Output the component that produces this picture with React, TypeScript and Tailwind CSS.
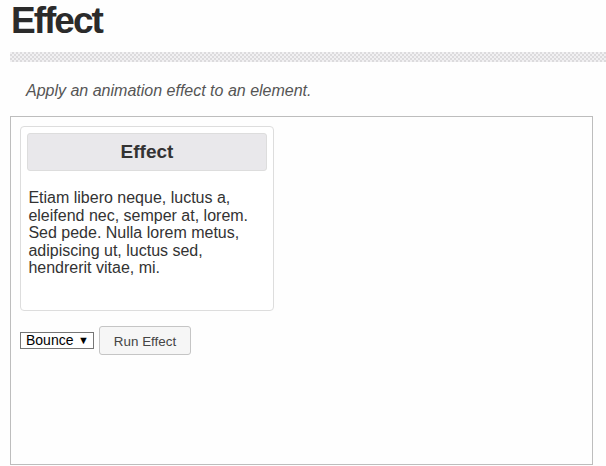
import React, { useState } from 'react';

const App = () => {
  const [effect, setEffect] = useState('bounce');

  return (
    <div className="min-h-screen bg-[#fefefe] font-['Liberation_Sans',Arial,sans-serif] text-[#333]">
      <h1 className="pl-[11px] pt-[2px] text-[37px] leading-[38px] font-bold tracking-[-2px] text-[#2b2b2b]">
        Effect
      </h1>

      <div className="mt-[12px] ml-[10px] h-[10px] bg-[image:repeating-conic-gradient(#dcdbdd_0_25%,#f1f0f2_0_50%)] bg-[length:4px_4px]" />

      <p className="mt-[20px] pl-[26px] text-[16px] leading-[18px] italic text-[#555]">
        Apply an animation effect to an element.
      </p>

      <div className="mt-[16px] ml-[10px] w-[583px] h-[349px] border border-[#bdbdbd] p-[9px]">
        <div className="w-[254px] h-[185px] border border-[#dddddd] rounded-[4px] p-[6.4px] bg-white">
          <h3 className="h-[38px] pb-[2px] border border-[#dddddd] rounded-[3px] bg-[#e9e8eb] flex items-center justify-center text-[19px] leading-[21px] font-bold text-[#333]">
            Effect
          </h3>
          <p className="mt-[18px] px-px text-[16px] leading-[17.4px] text-[#333]">
            Etiam libero neque, luctus a, eleifend nec, semper at, lorem. Sed pede. Nulla lorem metus, adipiscing ut, luctus sed, hendrerit vitae, mi.
          </p>
        </div>

        <div className="mt-[15px] flex items-center gap-[5px]">
          <div className="relative w-[74px] h-[17px]">
            <select
              value={effect}
              onChange={(e) => setEffect(e.target.value)}
              className="block appearance-none w-full h-full border border-[#767676] bg-white pl-[5px] py-0 font-['Liberation_Sans',Arial,sans-serif] text-[14px] leading-[15px] text-black outline-none"
            >
              <option value="blind">Blind</option>
              <option value="bounce">Bounce</option>
              <option value="clip">Clip</option>
              <option value="drop">Drop</option>
              <option value="explode">Explode</option>
              <option value="fade">Fade</option>
              <option value="fold">Fold</option>
              <option value="highlight">Highlight</option>
              <option value="puff">Puff</option>
              <option value="pulsate">Pulsate</option>
              <option value="scale">Scale</option>
              <option value="shake">Shake</option>
              <option value="size">Size</option>
              <option value="slide">Slide</option>
              <option value="transfer">Transfer</option>
            </select>
            <span className="pointer-events-none absolute right-[5px] top-[3px] text-[11px] leading-[11px] text-black">▼</span>
          </div>
          <button className="w-[92px] h-[29px] pt-[2px] border border-[#c5c5c5] rounded-[3px] bg-[#f6f6f6] text-[13.4px] leading-[15px] text-[#454545]">
            Run Effect
          </button>
        </div>
      </div>
    </div>
  );
};

export default App;
